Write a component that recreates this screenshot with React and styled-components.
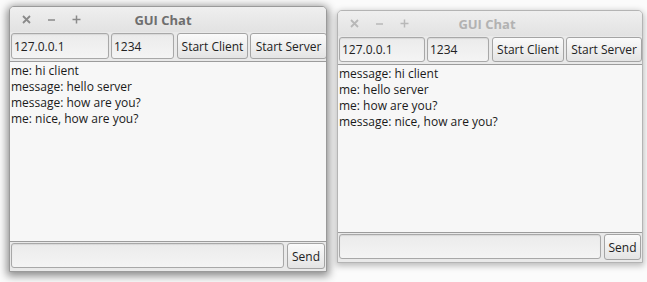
import React from "react";
import styled, { createGlobalStyle } from "styled-components";

const Global = createGlobalStyle`
  html, body { margin: 0; padding: 0; background: #fbfbfb; }
  body { font-family: "Open Sans", "Noto Sans", sans-serif; }
`;

const Desktop = styled.div`
  display: flex;
  align-items: flex-start;
  gap: 10px;
  padding-left: 9px;
  width: 647px;
  height: 282px;
  box-sizing: border-box;
`;

const Win = styled.div`
  margin-top: ${(p) => p.$top}px;
  width: ${(p) => p.$w}px;
  height: ${(p) => p.$h}px;
  box-sizing: border-box;
  display: flex;
  flex-direction: column;
  border: 1px solid ${(p) => (p.$active ? "#9a9a9a" : "#b4b4b4")};
  border-radius: 5px 5px 0 0;
  background: #e9e9e9;
  box-shadow: ${(p) =>
    p.$active
      ? "0 2px 8px 2px rgba(0,0,0,0.45)"
      : "0 2px 6px 1px rgba(0,0,0,0.25)"};
  overflow: hidden;
`;

const TitleBar = styled.div`
  height: 25px;
  flex: none;
  position: relative;
  display: flex;
  align-items: center;
  padding-left: 12px;
  background: linear-gradient(#efefef, #e2e2e2);
`;

const Controls = styled.div`
  display: flex;
  align-items: center;
  gap: 16px;
  color: ${(p) => (p.$active ? "#8a8a8a" : "#b8b8b8")};
`;

const Title = styled.div`
  position: absolute;
  left: 0;
  right: 0;
  top: 0;
  bottom: 0;
  display: flex;
  align-items: center;
  justify-content: center;
  font-weight: 700;
  font-size: 13px;
  color: ${(p) => (p.$active ? "#6e6e6e" : "#b2b2b2")};
  pointer-events: none;
  padding-right: ${(p) => p.$shift}px;
`;

const Toolbar = styled.div`
  flex: none;
  display: flex;
  gap: 2px;
  padding: 1px 1px 2px 1px;
  background: #e9e9e9;
`;

const Field = styled.div`
  box-sizing: border-box;
  width: ${(p) => p.$w}px;
  height: ${(p) => p.$h}px;
  flex: ${(p) => (p.$grow ? "1" : "none")};
  border: 1px solid #a8a8a8;
  border-radius: 3px;
  background: linear-gradient(#ebebeb, #f4f4f4);
  box-shadow: inset 0 1px 1px rgba(0,0,0,0.08);
  font-size: 12px;
  color: #222;
  display: flex;
  align-items: center;
  padding-left: 2px;
  margin-right: ${(p) => p.$mr || 0}px;
`;

const Button = styled.div`
  box-sizing: border-box;
  width: ${(p) => p.$w}px;
  height: ${(p) => p.$h}px;
  flex: none;
  border: 1px solid #a4a4a4;
  border-radius: 3px;
  background: linear-gradient(#fafafa, #e4e4e4);
  font-size: 12px;
  color: #222;
  display: flex;
  align-items: center;
  justify-content: center;
  white-space: nowrap;
`;

const Chat = styled.div`
  flex: 1;
  background: #f7f7f7;
  border-top: 1px solid #9c9c9c;
  border-bottom: 1px solid #9c9c9c;
  padding: 1px 0 0 1px;
  font-size: 12px;
  line-height: 16px;
  color: #1a1a1a;
`;

const Line = styled.div`
  white-space: nowrap;
`;

const Bottom = styled.div`
  flex: none;
  display: flex;
  gap: 2px;
  padding: 1px 1px 2px 1px;
  background: #e9e9e9;
  align-items: flex-start;
`;

function Window({ active, top, w, h, lines, sizes, shift }) {
  return (
    <Win $active={active} $top={top} $w={w} $h={h}>
      <TitleBar>
        <Controls $active={active}>
          <svg width="9" height="9" viewBox="0 0 9 9">
            <path d="M1 1L8 8M8 1L1 8" stroke="currentColor" strokeWidth="1.8" />
          </svg>
          <svg width="9" height="9" viewBox="0 0 9 9">
            <path d="M1 5H8" stroke="currentColor" strokeWidth="1.5" />
          </svg>
          <svg width="9" height="9" viewBox="0 0 9 9">
            <path d="M0.5 4.5H8.5M4.5 0.5V8.5" stroke="currentColor" strokeWidth="1.5" />
          </svg>
        </Controls>
        <Title $active={active} $shift={shift}>GUI Chat</Title>
      </TitleBar>
      <Toolbar>
        <Field $w={sizes.ip} $h={sizes.rowH}>127.0.0.1</Field>
        <Field $w={sizes.port} $h={sizes.rowH} $mr={1}>1234</Field>
        <Button $w={sizes.client} $h={sizes.rowH}>Start Client</Button>
        <Button $w={sizes.server} $h={sizes.rowH}>Start Server</Button>
      </Toolbar>
      <Chat>
        {lines.map((l, i) => (
          <Line key={i}>{l}</Line>
        ))}
      </Chat>
      <Bottom>
        <Field $grow $h={sizes.bottomH} $mr={1} />
        <Button $w={sizes.send} $h={sizes.bottomH + 1}>Send</Button>
      </Bottom>
    </Win>
  );
}

export default function App() {
  return (
    <>
      <Global />
      <Desktop>
        <Window
          active
          top={6}
          w={318}
          h={266}
          shift={10}
          sizes={{ ip: 98, port: 63, client: 71, server: 77, rowH: 26, bottomH: 25, send: 38 }}
          lines={["me: hi client", "message: hello server", "message: how are you?", "me: nice, how are you?"]}
        />
        <Window
          top={10}
          w={306}
          h={253}
          shift={6}
          sizes={{ ip: 86, port: 62, client: 72, server: 76, rowH: 25, bottomH: 25, send: 37 }}
          lines={["message: hi client", "me: hello server", "me: how are you?", "message: nice, how are you?"]}
        />
      </Desktop>
    </>
  );
}
